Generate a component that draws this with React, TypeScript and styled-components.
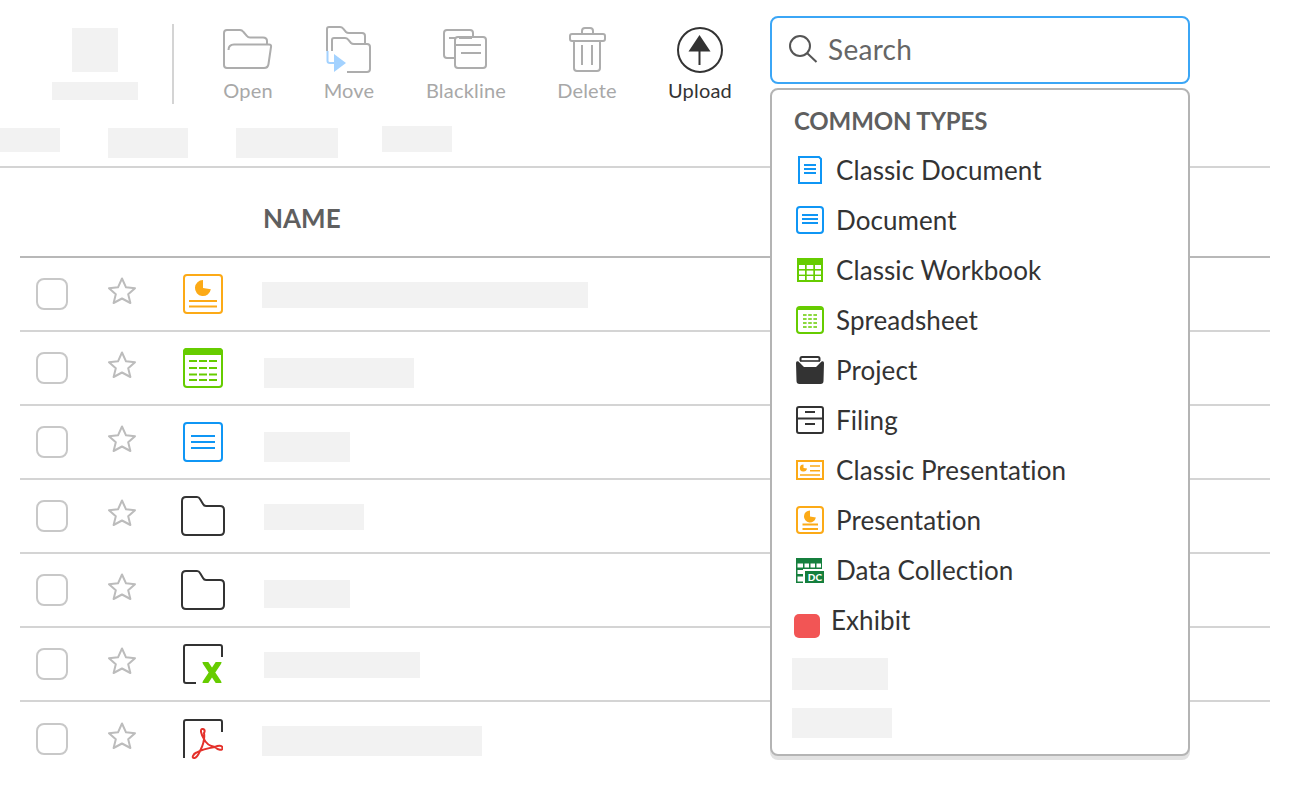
import React from 'react';
import styled, { createGlobalStyle } from 'styled-components';

const GlobalStyle = createGlobalStyle`
  html, body {
    margin: 0;
    padding: 0;
    background: #fff;
    font-family: Lato, "Open Sans", "Liberation Sans", sans-serif;
  }
`;

const Page = styled.div`
  width: 1300px;
  height: 802px;
  overflow: hidden;
`;

const Toolbar = styled.div`
  display: flex;
  align-items: flex-start;
  height: 126px;
  padding-top: 24px;
  box-sizing: border-box;
`;

const Skeleton = styled.div<{ $w: number; $h: number; $mt?: number; $ml?: number }>`
  flex: none;
  width: ${(p) => p.$w}px;
  height: ${(p) => p.$h}px;
  margin-top: ${(p) => p.$mt ?? 0}px;
  margin-left: ${(p) => p.$ml ?? 0}px;
  background: #f2f2f2;
`;

const UserGroup = styled.div`
  display: flex;
  flex-direction: column;
  width: 86px;
  margin-left: 52px;
  padding-top: 4px;
`;

const Divider = styled.div`
  width: 2px;
  height: 80px;
  margin-left: 34px;
  margin-right: 24px;
  background: #d4d4d4;
`;

const Tool = styled.div<{ $w: number; $active?: boolean }>`
  display: flex;
  flex-direction: column;
  align-items: center;
  width: ${(p) => p.$w}px;
  color: ${(p) => (p.$active ? '#333' : '#a8a8a8')};
`;

const ToolIcon = styled.div`
  display: flex;
  align-items: center;
  justify-content: center;
  height: 52px;
`;

const ToolLabel = styled.div`
  font-size: 20px;
  line-height: 26px;
  margin-top: 1px;
  letter-spacing: 0.2px;
`;

const SearchArea = styled.div`
  position: relative;
  width: 420px;
  margin-top: -8px;
  margin-left: 12px;
`;

const SearchBox = styled.div`
  display: flex;
  align-items: center;
  gap: 10px;
  height: 68px;
  padding: 0 0 2px 16px;
  box-sizing: border-box;
  border: 2px solid #3ba6f6;
  border-radius: 8px;
  font-size: 28px;
  letter-spacing: 0.3px;
  color: #666;
`;

const Dropdown = styled.div`
  position: absolute;
  z-index: 2;
  top: 72px;
  left: 0;
  width: 420px;
  height: 668px;
  box-sizing: border-box;
  padding-left: 22px;
  background: #fff;
  border: 2px solid #b4b4b4;
  border-radius: 8px;
  box-shadow: 0 4px 0 #e2e2e2;
`;

const DropdownTitle = styled.div`
  height: 56px;
  line-height: 62px;
  font-size: 24px;
  font-weight: 700;
  letter-spacing: -0.15px;
  color: #5f5f5f;
`;

const MenuItem = styled.div`
  display: flex;
  align-items: center;
  gap: 12px;
  height: 50px;
  padding: 0 0 2px 2px;
  box-sizing: border-box;
  font-size: 26px;
  letter-spacing: 0.08px;
  color: #333;
`;

const MenuIcon = styled.div`
  display: flex;
  width: 28px;
  height: 28px;
`;

const ExhibitItem = styled(MenuItem)`
  gap: 11px;
  padding-left: 0;
`;

const ExhibitSwatch = styled.div`
  width: 26px;
  height: 24px;
  margin-top: 12px;
  border-radius: 5px;
  background: #f25555;
`;

const MenuSkeletons = styled.div`
  display: flex;
  flex-direction: column;
  padding-top: 12px;
  margin-left: -2px;
  gap: 18px;
`;

const Filters = styled.div`
  display: flex;
  align-items: flex-start;
  height: 40px;
  border-bottom: 2px solid #d4d4d4;
  width: 1270px;
`;

const HeaderRow = styled.div`
  display: flex;
  align-items: center;
  height: 90px;
  margin-left: 20px;
  padding: 12px 0 0 243px;
  width: 1250px;
  box-sizing: border-box;
  border-bottom: 2px solid #b8b8b8;
  font-size: 26px;
  font-weight: 700;
  color: #5f5f5f;
`;

const Row = styled.div<{ $last?: boolean }>`
  display: flex;
  align-items: center;
  height: 74px;
  margin-left: 20px;
  width: 1250px;
  padding-left: 16px;
  box-sizing: border-box;
  border-bottom: ${(p) => (p.$last ? 'none' : '2px solid #d4d4d4')};
`;

const Checkbox = styled.div`
  flex: none;
  width: 32px;
  height: 32px;
  box-sizing: border-box;
  border: 2px solid #c8c8c8;
  border-radius: 8px;
`;

const StarCell = styled.div`
  display: flex;
  flex: none;
  width: 28px;
  margin-left: 40px;
  margin-bottom: 6px;
`;

const FileCell = styled.div`
  display: flex;
  flex: none;
  justify-content: center;
  margin-left: 45px;
  width: 44px;
`;

const NameCell = styled.div`
  display: flex;
  align-items: flex-start;
  align-self: start;
  margin-left: 39px;
`;

const OpenIcon = () => (
  <svg width="50" height="42" viewBox="0 0 50 42" fill="none" stroke="#adadad" strokeWidth="2">
    <path d="M5.5 21 Q5.5 15.5 11 15.5 H46 Q48.5 15.5 48 18 L45.5 35 Q45 39 41 39 H4 Q1 39 1 36 V4 Q1 1 4 1 H17 Q19 1 20.5 3 L24 7 Q25 8.5 27 8.5 H40 Q44 8.5 44 12 V15" />
  </svg>
);

const MoveIcon = () => (
  <svg width="48" height="50" viewBox="0 0 48 50" fill="none" stroke="#adadad" strokeWidth="2">
    <path d="M2 26 V4 Q2 2 4 2 H15 Q17 2 18 3.5 L21 7 Q22 8 24 8 H37 Q40 8 40 11 V19" />
    <path d="M7 26 V15 Q7 13 9 13 H20 Q22 13 23 14.5 L26 18 Q27 19 29 19 H42 Q45 19 45 22 V44 Q45 47 42 47 H22" />
    <path d="M2.5 26 V36 Q2.5 38 5 38 H12" stroke="#a3d2ff" />
    <path d="M9 29 L21 38 L9 47 Z" fill="#a3d2ff" stroke="none" />
  </svg>
);

const BlacklineIcon = () => (
  <svg width="46" height="42" viewBox="0 0 46 42" fill="none" stroke="#adadad" strokeWidth="2">
    <path d="M11 29 H4 Q1 29 1 26 V4 Q1 1 4 1 H27 Q30 1 30 4 V8" />
    <rect x="12" y="8" width="31" height="31" rx="3" />
    <path d="M6 9 H12 M16 9 H29 M13 16 H38 M18 24 H38" strokeWidth="1.8" />
  </svg>
);

const DeleteIcon = () => (
  <svg width="38" height="46" viewBox="-1 0 38 46" fill="none" stroke="#adadad" strokeWidth="2">
    <path d="M13 6 V4 Q13 1 16 1 H21 Q24 1 24 4 V6" />
    <rect x="1" y="7" width="35" height="7" rx="2" />
    <path d="M5 14 V41 Q5 44 8 44 H28 Q31 44 31 41 V14 M13 18 V38 M23 18 V38" />
  </svg>
);

const UploadIcon = () => (
  <svg width="48" height="48" viewBox="0 0 48 48" fill="none" stroke="#333" strokeWidth="2">
    <circle cx="24" cy="24" r="22" />
    <path d="M23.5 9 L34.5 25.5 H12.5 Z" fill="#333" stroke="none" />
    <path d="M23.5 24 V39" />
  </svg>
);

const SearchIcon = () => (
  <svg width="30" height="30" viewBox="0 0 30 30" fill="none" stroke="#555" strokeWidth="2">
    <circle cx="12" cy="12" r="10" />
    <path d="M19 19 L28.5 28" />
  </svg>
);

const StarIcon = () => (
  <svg width="28" height="28" viewBox="0 0 28 28" fill="none" stroke="#bcbcbc" strokeWidth="2" strokeLinejoin="round">
    <path d="M14 1.5 L18 10.3 L27 11.2 L20.2 17.3 L22.4 26 L14 21.5 L5.6 26 L7.8 17.3 L1 11.2 L10 10.3 Z" />
  </svg>
);

const Pie = ({ cx, cy, r, color }: { cx: number; cy: number; r: number; color: string }) => (
  <path
    d={`M${cx} ${cy} V${cy - r} A${r} ${r} 0 1 0 ${cx + r * 0.98} ${cy + r * 0.17} Z`}
    fill={color}
    stroke="none"
  />
);

const PresentationFile = () => (
  <svg width="40" height="40" viewBox="0 0 40 40" fill="none" stroke="#fcaa17" strokeWidth="2">
    <rect x="1" y="1" width="38" height="38" rx="3" />
    <Pie cx={20} cy={14} r={8} color="#fcaa17" />
    <path d="M6 27 H34 M6 32.5 H34" />
  </svg>
);

const SheetFile = () => (
  <svg width="40" height="40" viewBox="0 0 40 40" fill="none" stroke="#66cc00" strokeWidth="2">
    <rect x="1" y="1" width="38" height="38" rx="3" />
    <path d="M1 4 Q1 1 4 1 H36 Q39 1 39 4 V6 H1 Z" fill="#66cc00" />
    <path d="M6 13 H34 M6 20 H34 M6 26.5 H34 M6 32 H34" strokeDasharray="8 2" />
  </svg>
);

const DocFile = () => (
  <svg width="40" height="40" viewBox="0 0 40 40" fill="none" stroke="#0f96f5" strokeWidth="2">
    <rect x="1" y="1" width="38" height="38" rx="3" />
    <path d="M8 14 H32 M8 20 H32 M8 26 H32" />
  </svg>
);

const FolderFile = () => (
  <svg width="44" height="40" viewBox="0 0 44 40" fill="none" stroke="#333" strokeWidth="2">
    <path d="M1 5 Q1 1 5 1 H16 Q18 1 19 3 L22 8 Q23 10 25 10 H39 Q43 10 43 14 V35 Q43 39 39 39 H5 Q1 39 1 35 Z" />
  </svg>
);

const ExcelFile = () => (
  <svg width="40" height="40" viewBox="0 0 40 40" fill="none">
    <defs>
      <clipPath id="excel-x">
        <rect x="19.5" y="18" width="19" height="21" />
      </clipPath>
    </defs>
    <path d="M39 13 V3 Q39 1 37 1 H3 Q1 1 1 3 V37 Q1 39 3 39 H13" stroke="#333" strokeWidth="2" />
    <g clipPath="url(#excel-x)">
      <path d="M20 15 L38 42 M38 15 L20 42" stroke="#66cc00" strokeWidth="5.5" />
    </g>
  </svg>
);

const PdfFile = () => (
  <svg width="40" height="40" viewBox="0 0 40 40" fill="none">
    <path d="M39 13 V3 Q39 1 37 1 H3 Q1 1 1 3 V39" stroke="#333" strokeWidth="2" />
    <path
      d="M21 20 C23 25 27 27 32 28 C35 31 39.5 32 39.5 29 C39.5 26 35 26.5 32 28 C26 29 18 31 13.5 33.5 C10 35 8.5 39 11 39 C14 39.5 16 34 17.5 31 C20 26 22 20 21 14 C22.5 11.5 21 9.5 19 10 C17 10.5 18 15 21 20"
      stroke="#e4312b"
      strokeWidth="2"
    />
  </svg>
);

const ClassicDocIcon = () => (
  <svg width="28" height="28" viewBox="0 0 28 28" fill="none" stroke="#0f96f5" strokeWidth="2">
    <path d="M3 1 H23 L25 3 V27 H3 Z" />
    <path d="M8 9 H20 M8 13 H20 M8 17 H20" />
  </svg>
);

const DocumentIcon = () => (
  <svg width="28" height="28" viewBox="0 0 28 28" fill="none" stroke="#0f96f5" strokeWidth="2">
    <rect x="1" y="1" width="26" height="26" rx="3" />
    <path d="M6 9 H22 M6 13 H22 M6 17 H22" />
  </svg>
);

const ClassicWorkbookIcon = () => (
  <svg width="28" height="28" viewBox="0 0 28 28">
    <rect x="1" y="2" width="26" height="24" fill="#66cc00" />
    {[9, 14.6, 20].map((y) =>
      [3, 10.7, 19].map((x) => <rect key={`${x}-${y}`} x={x} y={y} width={x === 10.7 ? 6.6 : 6} height="4" fill="#fff" />)
    )}
  </svg>
);

const SpreadsheetIcon = () => (
  <svg width="28" height="28" viewBox="0 0 28 28" fill="none" stroke="#66cc00" strokeWidth="2">
    <rect x="1" y="1" width="26" height="26" rx="3" />
    <path d="M1.5 3 H26.5" />
    <path d="M7 9 H21 M7 13 H21 M7 17 H21 M7 21 H21" strokeWidth="1.6" strokeDasharray="3.6 1.6" />
  </svg>
);

const ProjectIcon = () => (
  <svg width="28" height="28" viewBox="0 0 28 28" fill="#333">
    <path d="M4.5 5 V2.5 Q4.5 1 6 1 H22 Q23.5 1 23.5 2.5 V5" fill="none" stroke="#333" strokeWidth="2" />
    <path d="M4 5 H24" stroke="#333" strokeWidth="1.6" />
    <path d="M0 7 Q0 4.5 2.5 5.5 L8 11 H20 L25.5 5.5 Q28 4.5 28 7 L27.5 25 Q27.5 28 24.5 28 H3.5 Q0.5 28 0.5 25 Z" />
  </svg>
);

const FilingIcon = () => (
  <svg width="28" height="28" viewBox="0 0 28 28" fill="none" stroke="#333" strokeWidth="2">
    <rect x="1" y="1" width="26" height="26" rx="2" />
    <path d="M1 12.5 H27 M9 6 H19 M9 18 H19" />
  </svg>
);

const ClassicPresentationIcon = () => (
  <svg width="28" height="28" viewBox="0 0 28 28" fill="none" stroke="#fcaa17" strokeWidth="2">
    <rect x="1" y="5" width="26" height="18" />
    <Pie cx={7.5} cy={12} r={3.6} color="#fcaa17" />
    <path d="M14 10 H24 M14 14.7 H24 M4 19 H24" strokeWidth="1.6" />
  </svg>
);

const PresentationIcon = () => (
  <svg width="28" height="28" viewBox="0 0 28 28" fill="none" stroke="#fcaa17" strokeWidth="2">
    <rect x="1" y="1" width="26" height="26" rx="3" />
    <Pie cx={14} cy={10.5} r={6} color="#fcaa17" />
    <path d="M6.5 18.5 H22 M6.5 23 H22" />
  </svg>
);

const DataCollectionIcon = () => (
  <svg width="28" height="28" viewBox="0 0 28 28">
    <rect x="0" y="2" width="26" height="25" fill="#157f3d" />
    <path d="M1.5 7.5 H7 V11.5 H1.5 Z M8.5 7.5 H13 V11.5 H8.5 Z M14.5 7.5 H19 V11.5 H14.5 Z M20.5 7.5 H25 V11.5 H20.5 Z M1.5 14 H7 V18 H1.5 Z M1.5 20.5 H7 V25.5 H1.5 Z M7 13 H26 V15 H9 V27 H7 Z" fill="#fff" />
    <rect x="10" y="15" width="18" height="12" fill="#157f3d" />
    <text x="19" y="24.6" textAnchor="middle" fontFamily="Lato, sans-serif" fontSize="10" fontWeight="900" fill="#fff">DC</text>
  </svg>
);

const tools = [
  { label: 'Open', width: 100, icon: <OpenIcon /> },
  { label: 'Move', width: 102, icon: <MoveIcon /> },
  { label: 'Blackline', width: 132, icon: <BlacklineIcon /> },
  { label: 'Delete', width: 110, icon: <DeleteIcon /> },
  { label: 'Upload', width: 116, icon: <UploadIcon />, active: true },
];

const filters = [
  { w: 60, h: 24, mt: 2, ml: 0 },
  { w: 80, h: 30, mt: 2, ml: 48 },
  { w: 102, h: 30, mt: 2, ml: 48 },
  { w: 70, h: 26, mt: 0, ml: 44 },
];

const types = [
  { label: 'Classic Document', icon: <ClassicDocIcon /> },
  { label: 'Document', icon: <DocumentIcon /> },
  { label: 'Classic Workbook', icon: <ClassicWorkbookIcon /> },
  { label: 'Spreadsheet', icon: <SpreadsheetIcon /> },
  { label: 'Project', icon: <ProjectIcon /> },
  { label: 'Filing', icon: <FilingIcon /> },
  { label: 'Classic Presentation', icon: <ClassicPresentationIcon /> },
  { label: 'Presentation', icon: <PresentationIcon /> },
  { label: 'Data Collection', icon: <DataCollectionIcon /> },
];

const rows = [
  { icon: <PresentationFile />, w: 326, h: 26, mt: 24, ml: -2 },
  { icon: <SheetFile />, w: 150, h: 30, mt: 26, ml: 0 },
  { icon: <DocFile />, w: 86, h: 30, mt: 26, ml: 0 },
  { icon: <FolderFile />, w: 100, h: 26, mt: 24, ml: 0 },
  { icon: <FolderFile />, w: 86, h: 28, mt: 26, ml: 0 },
  { icon: <ExcelFile />, w: 156, h: 26, mt: 24, ml: 0 },
  { icon: <PdfFile />, w: 220, h: 30, mt: 24, ml: -2 },
];

export default function App() {
  return (
    <Page>
      <GlobalStyle />
      <Toolbar>
        <UserGroup>
          <Skeleton $w={46} $h={44} $ml={20} />
          <Skeleton $w={86} $h={18} $mt={10} />
        </UserGroup>
        <Divider />
        {tools.map((tool) => (
          <Tool key={tool.label} $w={tool.width} $active={tool.active}>
            <ToolIcon>{tool.icon}</ToolIcon>
            <ToolLabel>{tool.label}</ToolLabel>
          </Tool>
        ))}
        <SearchArea>
          <SearchBox>
            <SearchIcon />
            <span>Search</span>
          </SearchBox>
          <Dropdown>
            <DropdownTitle>COMMON TYPES</DropdownTitle>
            {types.map((type) => (
              <MenuItem key={type.label}>
                <MenuIcon>{type.icon}</MenuIcon>
                {type.label}
              </MenuItem>
            ))}
            <ExhibitItem>
              <ExhibitSwatch />
              Exhibit
            </ExhibitItem>
            <MenuSkeletons>
              <Skeleton $w={96} $h={32} />
              <Skeleton $w={100} $h={30} />
            </MenuSkeletons>
          </Dropdown>
        </SearchArea>
      </Toolbar>
      <Filters>
        {filters.map((f, i) => (
          <Skeleton key={i} $w={f.w} $h={f.h} $mt={f.mt} $ml={f.ml} />
        ))}
      </Filters>
      <HeaderRow>NAME</HeaderRow>
      {rows.map((row, i) => (
        <Row key={i} $last={i === rows.length - 1}>
          <Checkbox />
          <StarCell>
            <StarIcon />
          </StarCell>
          <FileCell>{row.icon}</FileCell>
          <NameCell>
            <Skeleton $w={row.w} $h={row.h} $mt={row.mt} $ml={row.ml} />
          </NameCell>
        </Row>
      ))}
    </Page>
  );
}
